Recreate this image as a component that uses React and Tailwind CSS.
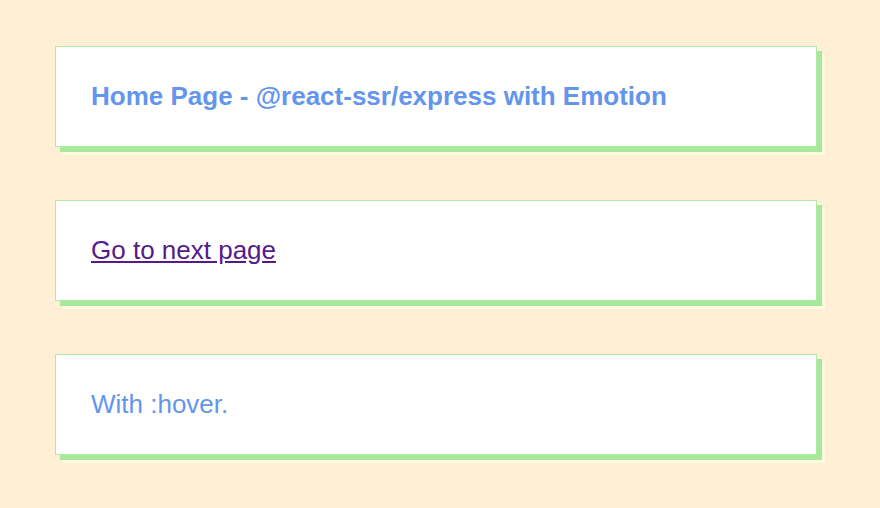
import React from 'react';

function Card({ children }) {
  return (
    <div className="bg-white border border-[#b0eaa6] px-[35px] py-[35px] text-[26px] leading-[29px] shadow-[5px_5px_0_#a6e99b,8px_8px_0_#fffbdf]">
      {children}
    </div>
  );
}

export default function App() {
  return (
    <div
      className="min-h-[508px] bg-[#ffefd5] pl-[55px] pr-[63px] pt-[46px] flex flex-col gap-[53px]"
      style={{ fontFamily: '"Liberation Sans", Arial, sans-serif' }}
    >
      <Card>
        <h1 className="font-bold text-[#6495ed]">
          Home Page - @react-ssr/express with Emotion
        </h1>
      </Card>
      <Card>
        <a href="#" className="text-[#551a8b] underline">
          Go to next page
        </a>
      </Card>
      <Card>
        <p className="text-[#6495ed]">With :hover.</p>
      </Card>
    </div>
  );
}
